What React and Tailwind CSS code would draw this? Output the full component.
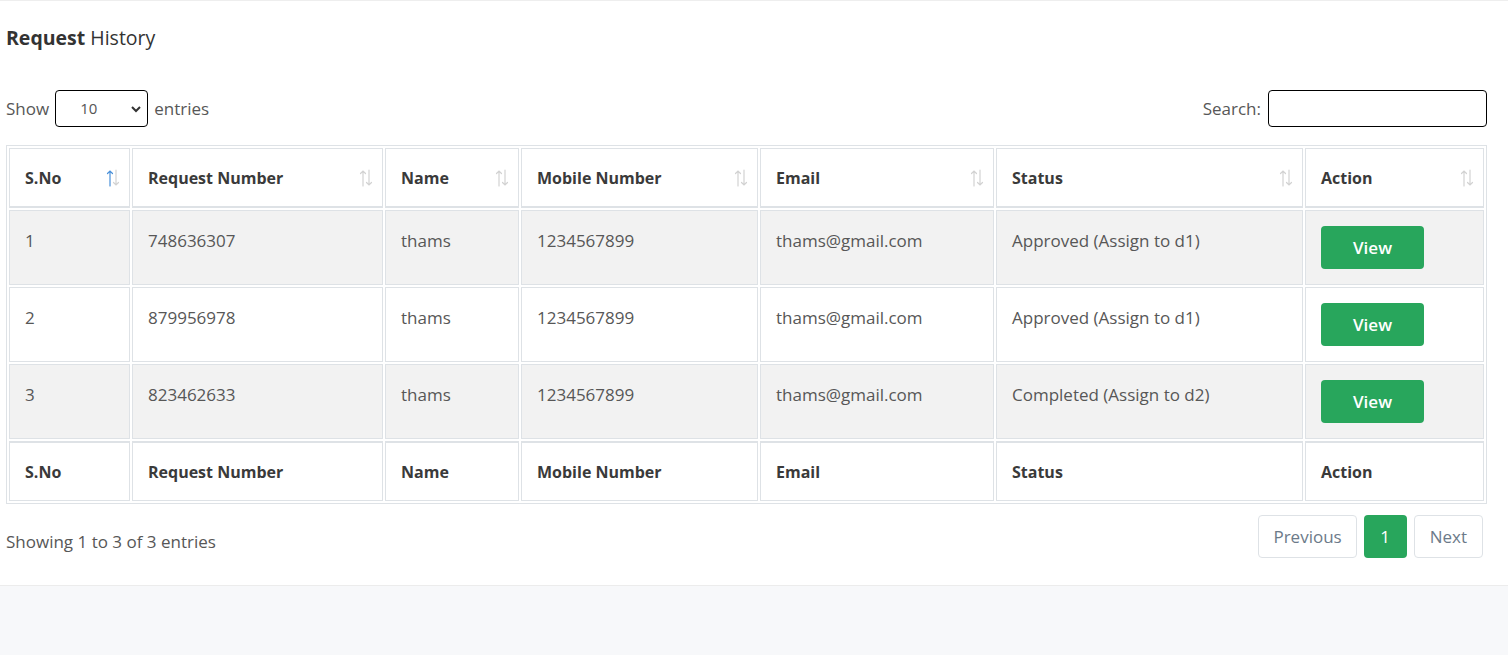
import React from "react";

const columns = [
  { key: "sno", label: "S.No", width: "w-[121px]", active: true },
  { key: "req", label: "Request Number", width: "w-[251px]" },
  { key: "name", label: "Name", width: "w-[134px]" },
  { key: "mobile", label: "Mobile Number", width: "w-[237px]" },
  { key: "email", label: "Email", width: "w-[234px]" },
  { key: "status", label: "Status", width: "w-[307px]" },
  { key: "action", label: "Action", width: "w-[179px]" },
];

const rows = [
  { sno: 1, req: "748636307", name: "thams", mobile: "1234567899", email: "thams@gmail.com", status: "Approved (Assign to d1)" },
  { sno: 2, req: "879956978", name: "thams", mobile: "1234567899", email: "thams@gmail.com", status: "Approved (Assign to d1)" },
  { sno: 3, req: "823462633", name: "thams", mobile: "1234567899", email: "thams@gmail.com", status: "Completed (Assign to d2)" },
];

// DataTables style up/down sort arrows
const SortIcon = ({ active }) => (
  <svg
    className="absolute right-[9px] top-1/2 -translate-y-1/2"
    width="14"
    height="18"
    viewBox="0 0 14 18"
  >
    <g fill="none" strokeWidth="1.2" strokeLinecap="round">
      <path d="M4 17V2M1.5 4.5L4 2l2.5 2.5" stroke={active ? "#4a90d9" : "#d2d2d2"} />
      <path d="M10 1v15M7.5 13.5L10 16l2.5-2.5" stroke="#d2d2d2" />
    </g>
  </svg>
);

const cell = "border border-[#dee2e6] px-[15px] pt-[17px] pb-[15px] align-top";

const App = () => {
  return (
    <div className="min-h-[655px] bg-[#f7f8fa] font-['Open_Sans',sans-serif] text-[#575757]">
      <div className="bg-white border-t border-[#eeeeee] px-[6px] pr-[21px] pt-[23px] pb-[27px] border-b border-b-[#ececec]">
        <h4 className="text-[19.5px] text-[#333] leading-[28px]">
          <span className="font-bold">Request</span> History
        </h4>

        {/* controls */}
        <div className="mt-[38px] flex items-center justify-between">
          <div className="flex items-center gap-[6px] text-[17px]">
            <span>Show</span>
            <div className="relative w-[93px] h-[37px] border border-black rounded-[4px] flex items-center pl-[24px] text-[15px] text-[#555]">
              10
              <svg className="absolute right-[5px] top-[13px]" width="12" height="10" viewBox="0 0 12 10">
                <path d="M2 3l4 4 4-4" fill="none" stroke="#333" strokeWidth="2" />
              </svg>
            </div>
            <span>entries</span>
          </div>
          <div className="flex items-center gap-[7px] text-[17px]">
            <span>Search:</span>
            <input className="w-[219px] h-[37px] border border-black rounded-[4px] outline-none" />
          </div>
        </div>

        {/* table */}
        <table className="mt-[18px] w-full table-fixed border-separate border-spacing-[2px] border border-[#dee2e6] text-[17px]">
          <thead>
            <tr>
              {columns.map((c) => (
                <th
                  key={c.key}
                  className={`${c.width} relative border border-[#dee2e6] border-b-2 px-[15px] h-[60px] text-left font-bold text-[16px] text-[#3a3a3a]`}
                >
                  {c.label}
                  <SortIcon active={c.active} />
                </th>
              ))}
            </tr>
          </thead>
          <tbody>
            {rows.map((r, i) => (
              <tr key={r.sno} className={i % 2 === 0 ? "bg-[#f2f2f2]" : "bg-white"}>
                <td className={`${cell} h-[75px]`}>{r.sno}</td>
                <td className={cell}>{r.req}</td>
                <td className={cell}>{r.name}</td>
                <td className={cell}>{r.mobile}</td>
                <td className={cell}>{r.email}</td>
                <td className={cell}>{r.status}</td>
                <td className="border border-[#dee2e6] px-[15px] pt-[15px] pb-[15px] align-top">
                  <button className="block w-[103px] h-[43px] rounded-[4px] bg-[#28a65c] text-white text-[17px] font-semibold">
                    View
                  </button>
                </td>
              </tr>
            ))}
          </tbody>
          <tfoot>
            <tr>
              {columns.map((c) => (
                <th
                  key={c.key}
                  className="border border-[#dee2e6] border-t-2 px-[15px] h-[60px] text-left font-bold text-[16px] text-[#3a3a3a]"
                >
                  {c.label}
                </th>
              ))}
            </tr>
          </tfoot>
        </table>

        {/* footer */}
        <div className="mt-[11px] flex items-center justify-between">
          <div className="text-[17px] pt-[10px]">Showing 1 to 3 of 3 entries</div>
          <div className="flex items-center gap-[7px] pr-[4px] text-[17px]">
            <button className="h-[43px] px-[14px] border border-[#dee2e6] rounded-[4px] text-[#6c7a89] bg-white">
              Previous
            </button>
            <button className="h-[43px] w-[43px] rounded-[4px] bg-[#28a65c] text-white">1</button>
            <button className="h-[43px] px-[15px] border border-[#dee2e6] rounded-[4px] text-[#6c7a89] bg-white">
              Next
            </button>
          </div>
        </div>
      </div>
    </div>
  );
};

export default App;
